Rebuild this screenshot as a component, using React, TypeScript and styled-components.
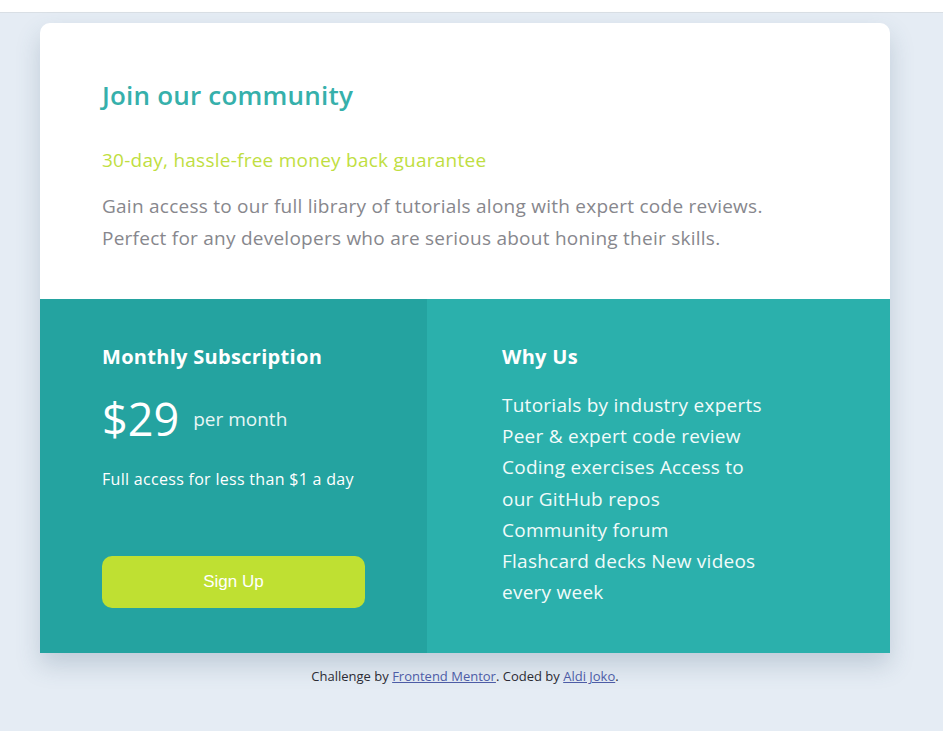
import React from "react";
import styled, { createGlobalStyle } from "styled-components";

const Global = createGlobalStyle`
  html, body { margin: 0; padding: 0; }
  body {
    background: #e5ecf4;
    font-family: "Open Sans", "Noto Sans", sans-serif;
    min-height: 731px;
  }
`;

const TopStrip = styled.div`
  height: 12px;
  background: #ffffff;
  border-bottom: 1px solid #d9dfe5;
`;

const Page = styled.div`
  width: 850px;
  margin: 10px 0 0 40px;
`;

const Card = styled.main`
  border-radius: 10px 10px 0 0;
  overflow: hidden;
  box-shadow: 0 12px 24px rgba(60, 90, 120, 0.22);
`;

const Intro = styled.section`
  background: #ffffff;
  padding: 56px 62px 46px;
  height: 276px;
  box-sizing: border-box;
`;

const Title = styled.h1`
  margin: 0;
  font-size: 26px;
  font-weight: 600;
  letter-spacing: 0.2px;
  color: #36b0ab;
  line-height: 32px;
`;

const Guarantee = styled.p`
  margin: 36px 0 0;
  font-size: 19px;
  letter-spacing: 0.25px;
  color: #c0de41;
  line-height: 26px;
`;

const Lead = styled.p`
  margin: 17px 0 0;
  font-size: 19px;
  letter-spacing: 0.25px;
  color: #87878d;
  line-height: 32px;
`;

const Columns = styled.div`
  display: grid;
  grid-template-columns: 387px 1fr;
  height: 354px;
`;

const Column = styled.section<{ $tone: "dark" | "light" }>`
  background: ${(p) => (p.$tone === "dark" ? "#24a3a0" : "#2bb0ac")};
  color: #ffffff;
  padding: ${(p) => (p.$tone === "dark" ? "44px 62px 0" : "44px 75px 0")};
  box-sizing: border-box;
  display: flex;
  flex-direction: column;
`;

const ColTitle = styled.h2`
  margin: 0;
  font-size: 20px;
  font-weight: 700;
  letter-spacing: 0.3px;
  line-height: 28px;
`;

const PriceRow = styled.div`
  display: flex;
  align-items: center;
  gap: 14px;
  margin-top: 20px;
`;

const Price = styled.span`
  font-size: 45px;
  line-height: 56px;
`;

const Per = styled.span`
  font-size: 19px;
  color: #e8f6f5;
`;

const Note = styled.p`
  margin: 20px 0 0;
  font-size: 16px;
  letter-spacing: 0.3px;
  line-height: 24px;
`;

const SignUp = styled.button`
  margin-top: 65px;
  width: 263px;
  height: 52px;
  border: none;
  border-radius: 10px;
  background: #bfe032;
  color: #ffffff;
  font-family: "Liberation Sans", Arial, sans-serif;
  font-size: 17px;
  cursor: pointer;
`;

const List = styled.ul`
  list-style: none;
  margin: 19px 0 0;
  padding: 0;
`;

const Item = styled.li`
  font-size: 19px;
  letter-spacing: 0.25px;
  line-height: 31.2px;
  color: #f1fbfa;
`;

const Footer = styled.footer`
  text-align: center;
  font-size: 13px;
  color: #2b2b33;
  margin-top: 14px;
  a { color: #4d5ca6; }
`;

const lines = [
  "Tutorials by industry experts",
  "Peer & expert code review",
  "Coding exercises Access to",
  "our GitHub repos",
  "Community forum",
  "Flashcard decks New videos",
  "every week",
];

export default function App() {
  return (
    <>
      <Global />
      <TopStrip />
      <Page>
        <Card>
          <Intro>
            <Title>Join our community</Title>
            <Guarantee>30-day, hassle-free money back guarantee</Guarantee>
            <Lead>
              Gain access to our full library of tutorials along with expert code reviews.
              <br />
              Perfect for any developers who are serious about honing their skills.
            </Lead>
          </Intro>
          <Columns>
            <Column $tone="dark">
              <ColTitle>Monthly Subscription</ColTitle>
              <PriceRow>
                <Price>$29</Price>
                <Per>per month</Per>
              </PriceRow>
              <Note>Full access for less than $1 a day</Note>
              <SignUp>Sign Up</SignUp>
            </Column>
            <Column $tone="light">
              <ColTitle>Why Us</ColTitle>
              <List>
                {lines.map((l) => (
                  <Item key={l}>{l}</Item>
                ))}
              </List>
            </Column>
          </Columns>
        </Card>
        <Footer>
          Challenge by <a href="#">Frontend Mentor</a>. Coded by <a href="#">Aldi Joko</a>.
        </Footer>
      </Page>
    </>
  );
}
